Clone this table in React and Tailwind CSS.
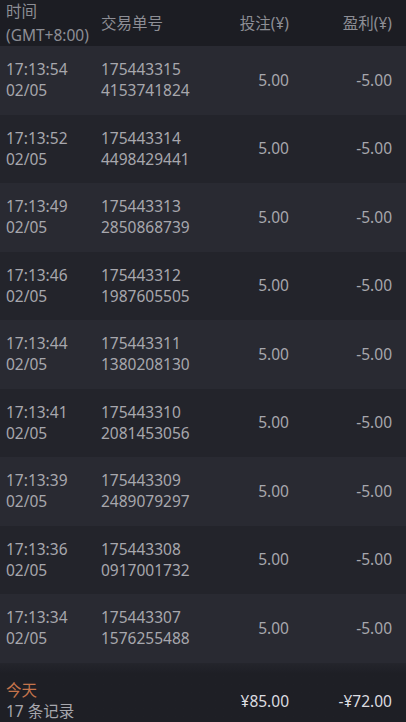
import React from "react";

const rows = [
  ["17:13:54", "175443315", "4153741824"],
  ["17:13:52", "175443314", "4498429441"],
  ["17:13:49", "175443313", "2850868739"],
  ["17:13:46", "175443312", "1987605505"],
  ["17:13:44", "175443311", "1380208130"],
  ["17:13:41", "175443310", "2081453056"],
  ["17:13:39", "175443309", "2489079297"],
  ["17:13:36", "175443308", "0917001732"],
  ["17:13:34", "175443307", "1576255488"],
];

const font = { fontFamily: '"Noto Sans", "Noto Sans CJK SC", sans-serif' };

export default function App() {
  return (
    <div
      className="w-[406px] bg-[#1d1e24] text-[15.5px] leading-[21px] text-[#a7a7ad]"
      style={font}
    >
      <div className="flex h-[46px] items-center overflow-hidden bg-[#1c1d23] pl-[6px] pr-[14px] text-[#8d8e95]">
        <div className="w-[95px] leading-[24px]">
          <div>时间</div>
          <div>(GMT+8:00)</div>
        </div>
        <div className="flex-1">交易单号</div>
        <div className="w-[80px] text-right">投注(¥)</div>
        <div className="w-[103px] text-right">盈利(¥)</div>
      </div>
      {rows.map((r, i) => (
        <div
          key={r[1]}
          className={
            "flex h-[68.5px] items-center pl-[6px] pr-[14px] " +
            (i % 2 === 0 ? "bg-[#292a32]" : "bg-[#23242b]")
          }
        >
          <div className="w-[95px]">
            <div>{r[0]}</div>
            <div>02/05</div>
          </div>
          <div className="flex-1">
            <div>{r[1]}</div>
            <div>{r[2]}</div>
          </div>
          <div className="w-[80px] text-right">5.00</div>
          <div className="w-[103px] text-right">-5.00</div>
        </div>
      ))}
      <div className="flex h-[77px] items-center bg-gradient-to-b from-[#24252c] to-[#1e1f25] to-[14%] pl-[6px] pr-[14px]">
        <div className="flex-1">
          <div className="text-[#c4744c]">今天</div>
          <div>17 条记录</div>
        </div>
        <div className="w-[80px] text-right text-[#dcdce0]">¥85.00</div>
        <div className="w-[103px] text-right text-[#dcdce0]">-¥72.00</div>
      </div>
    </div>
  );
}
